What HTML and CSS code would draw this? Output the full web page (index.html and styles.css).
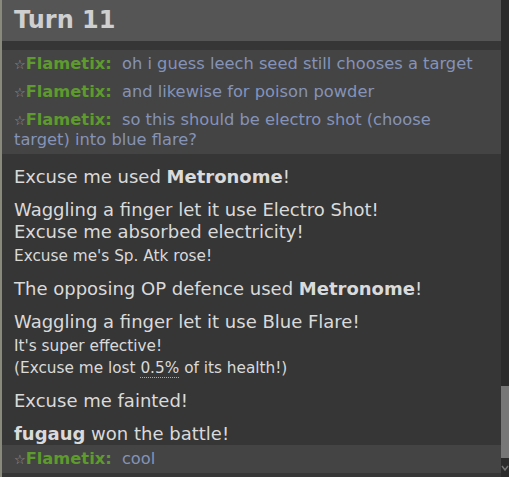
FILE: index.html
```html
<!DOCTYPE html>
<html lang="en">
<head>
    <meta charset="UTF-8">
    <title>Battle log</title>
    <link rel="stylesheet" href="styles.css">
</head>
<body>
    <div class="frame">
        <div class="log">
            <h2 class="turn">Turn 11</h2>

            <div class="chat-group">
                <div class="chat"><span class="rank">☆</span><strong class="name">Flametix:</strong> <em>oh i guess leech seed still chooses a target</em></div>
                <div class="chat"><span class="rank">☆</span><strong class="name">Flametix:</strong> <em>and likewise for poison powder</em></div>
                <div class="chat"><span class="rank">☆</span><strong class="name">Flametix:</strong> <em>so this should be electro shot (choose target) into blue flare?</em></div>
            </div>

            <div class="msgs">
                <div class="msg">Excuse me used <strong>Metronome</strong>!</div>
                <div class="msg">
                    Waggling a finger let it use Electro Shot!<br>
                    Excuse me absorbed electricity!
                    <small>Excuse me's Sp. Atk rose!</small>
                </div>
                <div class="msg">The opposing OP defence used <strong>Metronome</strong>!</div>
                <div class="msg">
                    Waggling a finger let it use Blue Flare!
                    <small>It's super effective!</small>
                    <small>(Excuse me lost <abbr title="HP lost">0.5%</abbr> of its health!)</small>
                </div>
                <div class="msg">Excuse me fainted!</div>
                <div class="msg"><strong>fugaug</strong> won the battle!</div>
            </div>

            <div class="chat-group">
                <div class="chat"><span class="rank">☆</span><strong class="name">Flametix:</strong> <em>cool</em></div>
            </div>
        </div>

        <div class="scrollbar">
            <div class="track"></div>
            <div class="thumb"></div>
            <div class="arrow">
                <svg width="8" height="8" viewBox="0 0 8 8"><path d="M1 2 L4 6 L7 2" fill="none" stroke="#777" stroke-width="1.5"/></svg>
            </div>
        </div>
    </div>
</body>
</html>
```

FILE: styles.css
```css
body {
    margin: 0;
    background: #8a8a7c;
    font-family: "DejaVu Sans", Verdana, sans-serif;
    height: 477px;
    overflow: hidden;
}
.frame {
    display: flex;
    height: 477px;
    margin-left: 2px;
    background: #363636;
}
.log {
    flex: 1;
    min-width: 0;
    overflow: hidden;
}
.turn {
    margin: 0 0 9px;
    height: 41px;
    line-height: 41px;
    padding-left: 12px;
    background: #555;
    color: #cfcfcf;
    font-size: 24px;
    font-weight: bold;
}
.chat-group {
    background: #444;
}
.chat {
    padding: 4px 12px 4px;
    line-height: 20px;
    font-size: 16.3px;
    color: #8593b8;
}
.chat em {
    font-style: normal;
    margin-left: 5px;
}
.rank {
    color: #999;
    font-size: 13px;
    line-height: 1;
}
.name {
    color: #5d9b2d;
}
.msgs {
    padding: 12px 12px 0;
    color: #dadada;
    font-size: 18px;
    line-height: 22px;
}
.msg {
    margin-bottom: 11px;
}
.msg:last-child {
    margin-bottom: 0;
}
.msg small {
    display: block;
    font-size: 15.3px;
    margin-top: 2px;
}
.msg small + small {
    margin-top: 0;
}
abbr {
    text-decoration: none;
    border-bottom: 1px dotted #aaa;
}
.scrollbar {
    width: 8px;
    display: flex;
    flex-direction: column;
    background: #2b2b2b;
}
.track {
    flex: 1;
}
.thumb {
    height: 72px;
    background: #777;
}
.arrow {
    height: 19px;
    display: flex;
    align-items: center;
    justify-content: center;
}
```
